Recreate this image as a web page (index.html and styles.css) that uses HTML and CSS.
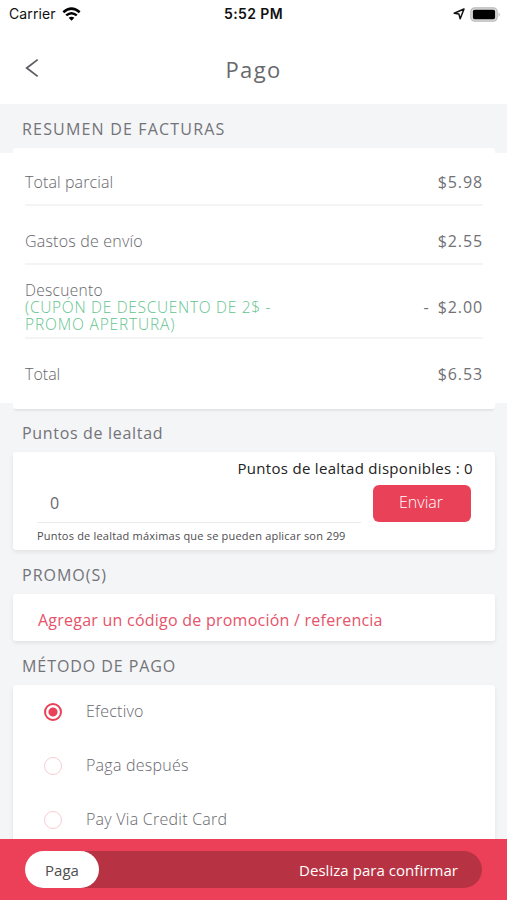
FILE: index.html
```html
<!DOCTYPE html>
<html lang="es">
<head>
<meta charset="utf-8">
<meta name="viewport" content="width=device-width, initial-scale=1">
<title>Pago</title>
<link rel="stylesheet" href="styles.css">
</head>
<body>
<div class="screen">
  <div class="status">
    <div class="carrier"><span>Carrier</span>
      <svg width="19" height="15" viewBox="0 0 19 15" fill="none" stroke="#000" stroke-width="2.5"><path d="M1.3 5.2Q9.5-1.9 17.7 5.2"/><path d="M4.2 8.4Q9.5 4 14.8 8.4"/><path d="M6.6 10.8Q9.5 8.6 12.4 10.8L9.5 13.8Z" fill="#000" stroke="none"/></svg>
    </div>
    <div class="clock">5:52 PM</div>
    <div class="indicators">
      <svg width="12" height="12" viewBox="0 0 12 12" fill="none" stroke="#111" stroke-width="1.5" stroke-linejoin="round"><path d="M11 1L1.2 5.2L5.9 6.1L7.2 10.8Z"/></svg>
      <svg width="31" height="15" viewBox="0 0 31 15"><rect x=".8" y=".8" width="26.4" height="13.4" rx="4" fill="#ddd" stroke="#bbb" stroke-width="1.2"/><rect x="2.9" y="2.8" width="22.2" height="9.4" rx="1.8" fill="#000"/><path d="M28.7 5.2Q30.7 7.5 28.7 9.8Z" fill="#aaa"/></svg>
    </div>
  </div>
  <header class="header">
    <svg class="back" width="14" height="20" viewBox="0 0 14 20" fill="none" stroke="#5c5c62" stroke-width="1.8"><path d="M12.7 1.6L1.7 10L12.7 18.4"/></svg>
    <h1>Pago</h1>
  </header>
  <main>
    <h2 class="t-resumen">RESUMEN DE FACTURAS</h2>
    <div class="summary">
      <section class="card bill">
        <div class="row"><span class="t-parcial">Total parcial</span><b>$5.98</b></div>
        <div class="row second"><span class="t-gastos">Gastos de envío</span><b>$2.55</b></div>
        <div class="row discount"><div><span class="t-desc">Descuento</span><em class="t-cupon">(CUPÓN DE DESCUENTO DE 2$ -</em><em class="t-promo">PROMO APERTURA)</em></div><b class="t-minus">- $2.00</b></div>
        <div class="row total"><span class="t-total">Total</span><b>$6.53</b></div>
      </section>
    </div>
    <h2 class="t-puntos">Puntos de lealtad</h2>
    <section class="card points">
      <p class="available">Puntos de lealtad disponibles : 0</p>
      <div class="form"><div class="input">0</div><button class="send">Enviar</button></div>
      <p class="hint">Puntos de lealtad máximas que se pueden aplicar son 299</p>
    </section>
    <h2 class="t-promos">PROMO(S)</h2>
    <section class="card code"><span>Agregar un código de promoción / referencia</span></section>
    <h2 class="t-metodo">MÉTODO DE PAGO</h2>
    <section class="card methods">
      <div class="option"><i class="radio on"></i><span class="t-efectivo">Efectivo</span></div>
      <div class="option"><i class="radio"></i><span class="t-despues">Paga después</span></div>
      <div class="option"><i class="radio"></i><span class="t-credit">Pay Via Credit Card</span></div>
    </section>
  </main>
  <footer class="footer"><div class="track"><div class="thumb">Paga</div><span>Desliza para confirmar</span></div></footer>
</div>
</body>
</html>
```
FILE: styles.css
```css
* { box-sizing: border-box; }
body, h1, h2, p { margin: 0; }
body { font-family: "Open Sans", "Noto Sans", sans-serif; font-size: 16px; color: #68686d; }
.screen { height: 900px; overflow: hidden; display: flex; flex-direction: column; background: #f3f5f7; }

.status { height: 28px; display: grid; grid-template-columns: 1fr auto 1fr; padding: 0 8px 0 9px; background: #fff; color: #111; font: 14px/28px Inter, sans-serif; flex: none; }
.carrier, .indicators { display: flex; align-items: center; }
.carrier { gap: 6px; padding-bottom: 2px; }
.carrier span { letter-spacing: .1px; }
.clock { font-weight: 600; letter-spacing: .4px; margin-left: -1px; }
.indicators { justify-content: flex-end; gap: 5px; padding-bottom: 2px; margin-right: -2px; }

.header { height: 76px; flex: none; background: #fff; display: grid; grid-template-columns: 14px 1fr 14px; padding: 0 25px; }
.back { margin-top: 30px; }
h1 { font-size: 22px; font-weight: 400; line-height: 82px; text-align: center; letter-spacing: 1.3px; }

main { flex: 1; min-height: 0; overflow: hidden; }
h2 { height: 44px; padding: 5px 22px 0; font-size: 16px; line-height: 40px; font-weight: 400; white-space: nowrap; color: #737378; }
.t-resumen { letter-spacing: 1.18px; }
.t-puntos { height: 43px; letter-spacing: .68px; line-height: 39px; }
.t-promos { letter-spacing: 1px; }
.t-metodo { letter-spacing: .93px; }

.card { margin: 0 12px 0 13px; background: #fff; border-radius: 3px; box-shadow: 0 2px 4px #00000014; }
.summary { background: linear-gradient(#f3f5f7 5px, #fff 5px, #fff 255px, #f3f5f7 255px); }
.bill { height: 261px; padding: 0 12px; box-shadow: 0 3px 2px -1px #00000012; }
.row { display: flex; justify-content: space-between; align-items: center; height: 58px; border-bottom: 2px solid #f3f4f5; padding-top: 12px; font-weight: 300; color: #66666b; }
.row b { font-weight: 400; letter-spacing: .9px; color: #717176; }
.row.second { height: 59px; }
.row.discount { height: 74px; padding-top: 12px; }
.row.total { border: 0; height: 70px; padding-top: 0; }
.discount div { display: flex; flex-direction: column; line-height: 17px; font-size: 15.5px; }
.discount .t-minus { padding-bottom: 1px; word-spacing: 3px; }
em { font-style: normal; color: #5fc48e; }
.t-parcial { letter-spacing: .1px; }
.t-gastos { letter-spacing: .2px; }
.t-desc { letter-spacing: .3px; }
.t-cupon { letter-spacing: .7px; }
.t-promo { letter-spacing: .85px; }

.points { height: 98px; padding: 4px 22px 0 24px; }
.available { text-align: right; color: #222; font-size: 15px; line-height: 24px; letter-spacing: .3px; }
.form { display: flex; gap: 12px; padding: 5px 2px 0 0; }
.input { flex: 1; height: 38px; line-height: 36px; padding-left: 13px; border-bottom: 1px solid #eaebed; }
.send { width: 98px; height: 37px; border: 0; border-radius: 6px; background: #e94158; color: #fff; font: 300 16px/35px "Open Sans", sans-serif; padding: 0 2px 2px 0; }
.hint { font-size: 11px; line-height: 16px; margin-top: 5px; letter-spacing: .2px; color: #4d4d50; }
.code { height: 47px; padding: 0 25px; line-height: 53px; letter-spacing: .24px; color: #e5536a; white-space: nowrap; }

.methods { height: 190px; border-radius: 3px 3px 0 0; }
.option { display: flex; align-items: center; height: 54px; gap: 24px; padding-left: 31px; font-weight: 300; }
.option span { padding-bottom: 2px; letter-spacing: .25px; }
.radio { width: 18px; height: 18px; border: 1.5px solid #f8ccd3; border-radius: 50%; }
.radio.on { border: 2px solid #e94158; background: radial-gradient(circle, #e94158 4px, #fff 5px); }

.footer { height: 61px; flex: none; background: #ec4059; padding: 12px 25px; }
.track { height: 37px; border-radius: 19px; background: #b73343; color: #fff; display: flex; align-items: center; justify-content: space-between; padding-right: 24px; font-size: 15px; letter-spacing: .05px; }
.thumb { width: 74px; height: 37px; border-radius: 19px; background: #fff; color: #4d4d50; text-align: center; line-height: 38px; }
```
